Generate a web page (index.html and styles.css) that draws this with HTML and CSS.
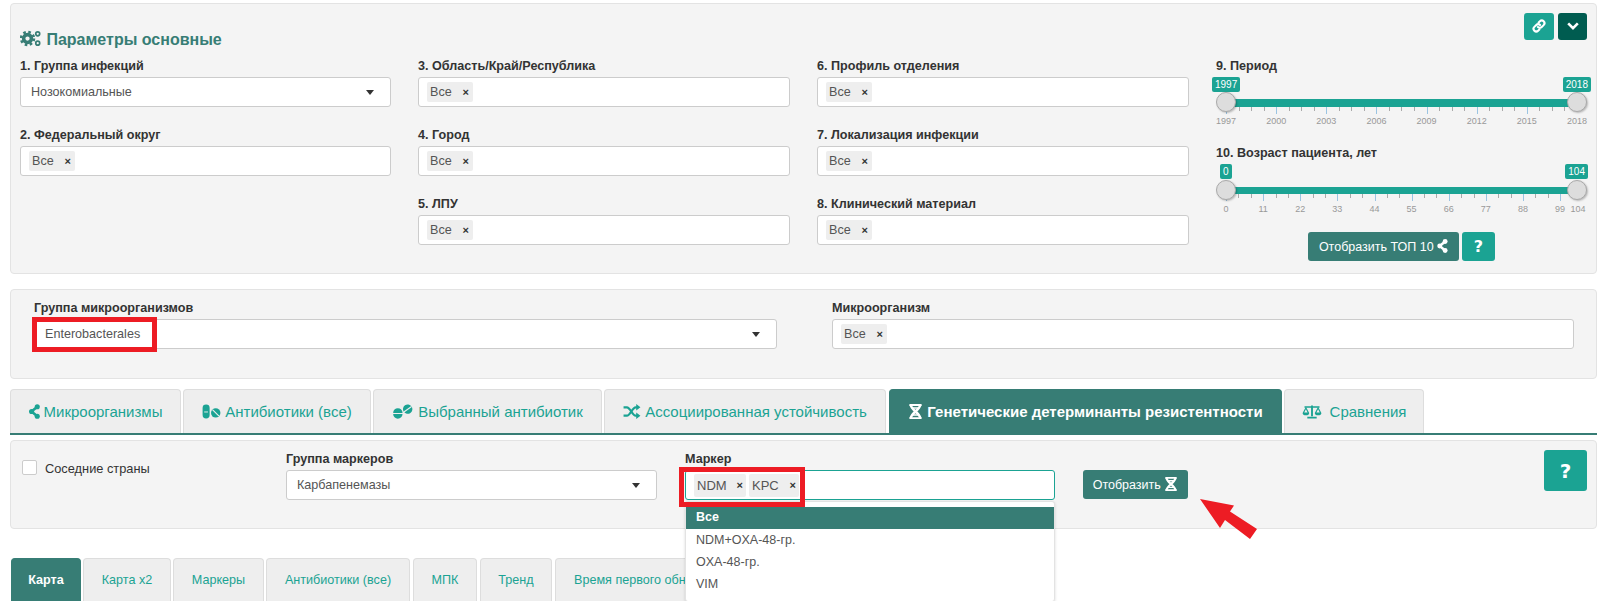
FILE: index.html
```html
<!DOCTYPE html>
<html lang="en">
  <head>
    <meta charset="UTF-8" />
    <meta name="viewport" content="width=device-width, initial-scale=1.0" />
    <title>Карта резистентности</title>
    <link rel="stylesheet" href="styles.css">
  </head>
  <body>
    <svg class="sprite" aria-hidden="true">
      <symbol id="i-cogs" viewBox="0 0 24 20">
        <circle cx="8.500" cy="10" r="4.600" fill="none" stroke="currentColor" stroke-width="4.200"/>
        <circle cx="8.500" cy="10" r="7.600" fill="none" stroke="currentColor" stroke-width="3" stroke-dasharray="3 2.970"/>
        <circle cx="20.500" cy="4.500" r="2.300" fill="none" stroke="currentColor" stroke-width="2"/>
        <circle cx="20.500" cy="15.500" r="2.300" fill="none" stroke="currentColor" stroke-width="2"/>
      </symbol>
      <symbol id="i-link" viewBox="0 0 16 16">
        <g fill="none" stroke="currentColor" stroke-width="2.400" stroke-linecap="round">
          <path d="M6.800 9.200a3 3 0 0 0 4.300 0l2.200-2.200a3 3 0 0 0-4.300-4.300L7.600 4"/>
          <path d="M9.200 6.800a3 3 0 0 0-4.300 0L2.700 9a3 3 0 0 0 4.300 4.300L8.400 12"/>
        </g>
      </symbol>
      <symbol id="i-chevron" viewBox="0 0 16 16">
        <path d="M2.500 5l5.500 5.500L13.500 5" fill="none" stroke="currentColor" stroke-width="3"/>
      </symbol>
      <symbol id="i-nodes" viewBox="0 0 12 16">
        <circle cx="9" cy="2.800" r="2.800" fill="currentColor"/>
        <circle cx="2.800" cy="8" r="2.800" fill="currentColor"/>
        <circle cx="9" cy="13.200" r="2.800" fill="currentColor"/>
        <path d="M9 2.800L2.800 8 9 13.200" fill="none" stroke="currentColor" stroke-width="2.800"/>
      </symbol>
      <symbol id="i-pills" viewBox="0 0 20 16">
        <rect x="0.500" y="0.500" width="7.500" height="15" rx="3.700" fill="currentColor"/>
        <rect x="2.200" y="8" width="4" height="1" fill="#eee"/>
        <circle cx="14.500" cy="9.500" r="5" fill="currentColor"/>
        <path d="M11 6l7 7" stroke="#eee" stroke-width="1.200"/>
      </symbol>
      <symbol id="i-tablets" viewBox="0 0 22 16">
        <path d="M0.500 9.500h10a5 5 0 0 0-10 0zM0.500 10.700h10a5 5 0 0 1-10 0z" fill="currentColor"/>
        <g transform="rotate(-35 16 5.500)">
          <circle cx="16" cy="5.500" r="5" fill="currentColor"/>
          <rect x="11" y="5" width="10" height="1.200" fill="#eee"/>
        </g>
      </symbol>
      <symbol id="i-random" viewBox="0 0 18 16">
        <g fill="none" stroke="currentColor" stroke-width="2.400">
          <path d="M0 3.500h3.500c4 0 5.500 9 9.500 9h1.500"/>
          <path d="M0 12.500h3.500c4 0 5.500-9 9.500-9h1.500"/>
        </g>
        <path d="M13.500 0l4.500 3.500-4.500 3.500zM13.500 9l4.500 3.500-4.500 3.500z" fill="currentColor"/>
      </symbol>
      <symbol id="i-dna" viewBox="0 0 14 16">
        <g fill="none" stroke="currentColor">
          <path d="M0.500 1h13M0.500 15h13" stroke-width="2"/>
          <path d="M2 1c0 5 10 9 10 14M12 1c0 5-10 9-10 14" stroke-width="2.600"/>
          <path d="M3 4.200h8M3 11.800h8" stroke-width="1.600"/>
        </g>
      </symbol>
      <symbol id="i-scale" viewBox="0 0 20 16">
        <path d="M9 1.500h2V13H9zM5 13.500h10V15.500H5zM2 2.500h16V4H2z" fill="currentColor"/>
        <path d="M0 9.500l3.500-6.500L7 9.500a3.500 2.500 0 0 1-7 0zM13 9.500l3.500-6.500L20 9.500a3.500 2.500 0 0 1-7 0z" fill="currentColor"/>
        <path d="M1.700 9h3.600L3.500 5.500zM14.700 9h3.600l-1.800-3.500z" fill="#eee"/>
      </symbol>
    </svg>

    <section class="well well-main">
      <header class="well-header">
        <h2 class="well-title">
          <svg class="icon icon-cogs"><use href="#i-cogs"/></svg>
          Параметры основные
        </h2>
        <div class="well-actions">
          <button class="btn-small btn-teal"><svg class="icon"><use href="#i-link"/></svg></button>
          <button class="btn-small btn-dark"><svg class="icon"><use href="#i-chevron"/></svg></button>
        </div>
      </header>

      <div class="filters">
        <div class="filter-col">
          <div class="field">
            <label>1. Группа инфекций</label>
            <div class="input input-select">Нозокомиальные</div>
          </div>
          <div class="field">
            <label>2. Федеральный округ</label>
            <div class="input"><span class="chip">Все <i>×</i></span></div>
          </div>
        </div>
        <div class="filter-col">
          <div class="field">
            <label>3. Область/Край/Республика</label>
            <div class="input"><span class="chip">Все <i>×</i></span></div>
          </div>
          <div class="field">
            <label>4. Город</label>
            <div class="input"><span class="chip">Все <i>×</i></span></div>
          </div>
          <div class="field">
            <label>5. ЛПУ</label>
            <div class="input"><span class="chip">Все <i>×</i></span></div>
          </div>
        </div>
        <div class="filter-col">
          <div class="field">
            <label>6. Профиль отделения</label>
            <div class="input"><span class="chip">Все <i>×</i></span></div>
          </div>
          <div class="field">
            <label>7. Локализация инфекции</label>
            <div class="input"><span class="chip">Все <i>×</i></span></div>
          </div>
          <div class="field">
            <label>8. Клинический материал</label>
            <div class="input"><span class="chip">Все <i>×</i></span></div>
          </div>
        </div>
        <div class="filter-col">
          <label>9. Период</label>
          <div class="slider">
            <span class="slider-tag tag-from">1997</span>
            <span class="slider-tag tag-to">2018</span>
            <span class="handle handle-from"></span>
            <span class="handle handle-to"></span>
            <div class="track"></div>
            <div class="ticks ticks-period"></div>
            <div class="scale scale-period">
              <span>1997</span><span>2000</span><span>2003</span><span>2006</span><span>2009</span><span>2012</span><span>2015</span><span>2018</span>
            </div>
          </div>
          <label class="label-age">10. Возраст пациента, лет</label>
          <div class="slider slider-age">
            <span class="slider-tag tag-from">0</span>
            <span class="slider-tag tag-to">104</span>
            <span class="handle handle-from"></span>
            <span class="handle handle-to"></span>
            <div class="track"></div>
            <div class="ticks ticks-age"></div>
            <div class="scale scale-age">
              <span>0</span><span>11</span><span>22</span><span>33</span><span>44</span><span>55</span><span>66</span><span>77</span><span>88</span><span>99</span><span>104</span>
            </div>
          </div>
          <div class="top-actions">
            <button class="btn btn-green">Отобразить ТОП 10 <svg class="icon icon-nodes"><use href="#i-nodes"/></svg></button>
            <button class="btn btn-help-small">?</button>
          </div>
        </div>
      </div>
    </section>

    <section class="well well-micro">
      <div class="field-micro">
        <label>Группа микроорганизмов</label>
        <div class="input input-select">Enterobacterales</div>
        <span class="mark mark-group"></span>
      </div>
      <div class="field-micro">
        <label>Микроорганизм</label>
        <div class="input"><span class="chip">Все <i>×</i></span></div>
      </div>
    </section>

    <nav class="tabs">
      <a class="tab tab-1"><svg class="icon"><use href="#i-nodes"/></svg> Микроорганизмы</a>
      <a class="tab tab-2"><svg class="icon"><use href="#i-pills"/></svg> Антибиотики (все)</a>
      <a class="tab tab-3"><svg class="icon"><use href="#i-tablets"/></svg> Выбранный антибиотик</a>
      <a class="tab tab-4"><svg class="icon"><use href="#i-random"/></svg> Ассоциированная устойчивость</a>
      <a class="tab tab-5 active"><svg class="icon"><use href="#i-dna"/></svg> Генетические детерминанты резистентности</a>
      <a class="tab tab-6"><svg class="icon"><use href="#i-scale"/></svg> Сравнения</a>
    </nav>

    <section class="well well-markers">
      <label class="check"><span class="check-box"></span> Соседние страны</label>
      <div class="field-marker">
        <label>Группа маркеров</label>
        <div class="input input-select">Карбапенемазы</div>
      </div>
      <div class="field-marker field-open">
        <label>Маркер</label>
        <div class="input input-focus">
          <span class="chip">NDM <i>×</i></span>
          <span class="chip">KPC <i>×</i></span>
        </div>
        <span class="mark mark-chips"></span>
        <ul class="dropdown">
          <li class="selected">Все</li>
          <li>NDM+OXA-48-гр.</li>
          <li>OXA-48-гр.</li>
          <li>VIM</li>
        </ul>
      </div>
      <button class="btn btn-green btn-show">Отобразить <svg class="icon"><use href="#i-dna"/></svg></button>
      <svg class="arrow" viewBox="0 0 60 42"><polygon points="0,0 34,6.500 30,12.500 57,30 50,40 25,21 20,29"/></svg>
      <button class="btn btn-help">?</button>
    </section>

    <nav class="subtabs">
      <a class="subtab active sub-1">Карта</a>
      <a class="subtab sub-2">Карта x2</a>
      <a class="subtab sub-3">Маркеры</a>
      <a class="subtab sub-4">Антибиотики (все)</a>
      <a class="subtab sub-5">МПК</a>
      <a class="subtab sub-6">Тренд</a>
      <a class="subtab sub-7">Время первого обнаружения</a>
    </nav>
  </body>
</html>
```

FILE: styles.css
```css
html,
body {
  height: 601px;
  overflow: hidden;
}

body {
  margin: 0;
  padding: 3px 6px 0 10px;
  box-sizing: border-box;
  background: #fff;
  color: #333;
  font-family: "Liberation Sans", Arial, sans-serif;
  font-size: 12.600px;
}

.sprite {
  display: none;
}

label {
  display: block;
  height: 17px;
  line-height: 13px;
  font-size: 12.600px;
  font-weight: 700;
  color: #333;
}

button {
  font-family: inherit;
  border: none;
  cursor: pointer;
}

.icon {
  display: inline-block;
  width: 14px;
  height: 14px;
  fill: currentColor;
  vertical-align: -2px;
}

.well {
  box-sizing: border-box;
  background: #f4f4f4;
  border: 1px solid #e3e3e3;
  border-radius: 4px;
}

.well-main {
  height: 271px;
  padding: 9px 9px 0 9px;
}

.well-header {
  display: flex;
  justify-content: space-between;
  height: 47px;
}

.well-title {
  margin: 17px 0 0;
  font-size: 16px;
  line-height: 20px;
  color: #377d75;
}

.icon-cogs {
  width: 21px;
  height: 17px;
  margin-right: 1px;
}

.well-actions {
  display: flex;
  gap: 4px;
}

.btn-small {
  width: 30px;
  height: 27px;
  padding: 0;
  border-radius: 3px;
  color: #fff;
}

.btn-teal {
  background: #1ba393;
}

.btn-dark {
  width: 29px;
  background: #005c50;
}

.filters {
  display: grid;
  grid-template-columns: 371px 372px 372px 371px;
  column-gap: 27px;
}

.field {
  margin-bottom: 22px;
}

.input {
  box-sizing: border-box;
  display: flex;
  align-items: center;
  gap: 3px;
  height: 30px;
  padding: 0 10px 0 8px;
  background: #fff;
  border: 1px solid #ccc;
  border-radius: 3px;
  font-size: 12.600px;
  color: #555;
}

.input-select {
  position: relative;
  padding-left: 10px;
}

.input-select::after {
  content: "";
  position: absolute;
  right: 16px;
  top: 12px;
  border: 4px solid transparent;
  border-top: 5px solid #333;
  border-bottom: none;
}

.input-focus {
  border-color: #1ba393;
}

.chip {
  display: flex;
  align-items: center;
  justify-content: space-between;
  box-sizing: border-box;
  width: 46px;
  height: 20px;
  padding: 0 4px 0 3px;
  background: #eee;
  border-radius: 2px;
  font-size: 12.600px;
  color: #555;
}

.chip i {
  font-style: normal;
  font-weight: 700;
  font-size: 11px;
  color: #333;
}

.input-focus .chip {
  width: 52px;
  height: 23px;
  padding: 0 3px;
  font-size: 13px;
}

.input-focus .chip + .chip {
  width: 50px;
}

.slider {
  position: relative;
  height: 52px;
  padding: 22px 10px 0;
  box-sizing: border-box;
}

.slider-age {
  height: 60px;
  padding-top: 23px;
}

.track {
  height: 8px;
  background: #1ba393;
}

.slider-age .track {
  height: 7px;
}

.handle {
  position: absolute;
  top: 15px;
  width: 18px;
  height: 18px;
  background: #ddd;
  border: 1px solid #aaa;
  border-radius: 50%;
  box-shadow: 1px 1px 2px rgba(0, 0, 0, 0.25);
}

.slider-age .handle {
  top: 16px;
}

.handle-from {
  left: 0;
}

.handle-to {
  right: 0;
}

.slider-tag {
  position: absolute;
  top: 0;
  height: 15px;
  line-height: 15px;
  padding: 0 3px;
  background: #1ba393;
  border-radius: 2px;
  color: #fff;
  font-size: 10px;
}

.tag-from {
  left: -4px;
}

.tag-to {
  right: -4px;
}

.slider-age .tag-from {
  left: 4px;
}

.slider-age .tag-to {
  right: -1px;
}

.ticks {
  height: 7px;
}

.ticks-period {
  background:
    repeating-linear-gradient(90deg, #9bc4e2 0 1px, transparent 1px 50.140px) 0 0 / 100% 7px no-repeat,
    repeating-linear-gradient(90deg, #aaa 0 1px, transparent 1px 12.535px) 0 0 / 100% 4px no-repeat;
}

.ticks-age {
  background:
    repeating-linear-gradient(90deg, #9bc4e2 0 1px, transparent 1px 37.130px) 0 0 / 100% 7px no-repeat,
    repeating-linear-gradient(90deg, #aaa 0 1px, transparent 1px 12.377px) 0 0 / 100% 4px no-repeat;
}

.scale {
  display: grid;
  margin-top: 1px;
  height: 12px;
  line-height: 12px;
  font-size: 9px;
  color: #999;
}

.slider-age .scale {
  margin-top: 2px;
}

.scale span {
  justify-self: start;
  transform: translateX(-50%);
}

.scale-period {
  grid-template-columns: repeat(7, 1fr) 0;
}

.scale-age {
  grid-template-columns: repeat(9, 37.130px) 17.800px 0;
}

.label-age {
  margin-top: 18px;
}

.top-actions {
  display: flex;
  justify-content: center;
  gap: 3px;
  margin-top: 8px;
}

.btn {
  height: 29px;
  padding: 0;
  border-radius: 3px;
  color: #fff;
  font-size: 12.500px;
}

.btn-green {
  width: 151px;
  background: #377d75;
}

.icon-nodes {
  width: 11px;
}

.btn-help-small {
  width: 33px;
  background: #1ba393;
  font-family: "DejaVu Sans", sans-serif;
  font-size: 16px;
  font-weight: 700;
}

.well-micro {
  display: grid;
  grid-template-columns: 743px 742px;
  column-gap: 55px;
  height: 90px;
  margin-top: 15px;
  padding: 11px 23px 0;
}

.field-micro {
  position: relative;
}

.field-micro label {
  line-height: 15px;
  margin-bottom: 1px;
}

.mark {
  position: absolute;
  z-index: 3;
  box-sizing: border-box;
  border: 5px solid #ed1c24;
}

.mark-group {
  left: -2px;
  top: 16px;
  width: 125px;
  height: 35px;
}

.tabs {
  display: flex;
  gap: 2px;
  height: 44px;
  margin-top: 10px;
  border-bottom: 2px solid #377d75;
}

.tab {
  box-sizing: border-box;
  display: flex;
  align-items: center;
  justify-content: center;
  gap: 4px;
  height: 44px;
  background: #eee;
  border: 1px solid #ddd;
  border-bottom: none;
  border-radius: 4px 4px 0 0;
  font-size: 15px;
  color: #1ba393;
  white-space: nowrap;
}

.tab .icon {
  width: 15px;
  height: 15px;
  vertical-align: 0;
}

.tab-1 { width: 171px; }
.tab-2 { width: 188px; }
.tab-3 { width: 229px; }
.tab-4 { width: 282px; }
.tab-5 { width: 393px; margin-left: 1px; }
.tab-6 { width: 140px; gap: 8px; }

.tab-1 .icon { width: 11px; }
.tab-2 .icon { width: 19px; }
.tab-3 .icon { width: 22px; }
.tab-4 .icon { width: 18px; }
.tab-6 .icon { width: 20px; }

.tab.active {
  background: #377d75;
  border-color: #377d75;
  color: #fff;
  font-weight: 700;
}

.well-markers {
  position: relative;
  display: flex;
  align-items: flex-start;
  height: 89px;
  margin-top: 5px;
  padding: 10px 9px 0 11px;
}

.check {
  display: flex;
  align-items: center;
  gap: 8px;
  width: 264px;
  margin-top: 9px;
  line-height: 17px;
  font-size: 12.800px;
  font-weight: 400;
}

.check-box {
  box-sizing: border-box;
  width: 15px;
  height: 15px;
  margin-top: -2px;
  background: #fff;
  border: 1px solid #ccc;
  border-radius: 2px;
}

.field-marker {
  position: relative;
  width: 371px;
  margin-right: 28px;
}

.field-open {
  width: 370px;
}

.field-marker label {
  line-height: 17px;
  margin-bottom: 2px;
}

.mark-chips {
  left: -6px;
  top: 16px;
  width: 126px;
  height: 40px;
}

.dropdown {
  position: absolute;
  z-index: 2;
  top: 50px;
  left: 0;
  width: 100%;
  box-sizing: border-box;
  margin: 0;
  padding: 5px 0 6px;
  list-style: none;
  background: #fff;
  border: 1px solid #e3e3e3;
  border-radius: 3px;
  box-shadow: 0 1px 3px rgba(0, 0, 0, 0.15);
  font-size: 12.500px;
  color: #555;
}

.dropdown li {
  height: 22px;
  line-height: 22px;
  padding-left: 10px;
}

.dropdown .selected {
  line-height: 20px;
  background: #377d75;
  color: #fff;
  font-weight: 700;
}

.btn-show {
  width: 105px;
  margin-top: 19px;
}

.arrow {
  position: absolute;
  z-index: 3;
  left: 1189px;
  top: 58px;
  width: 60px;
  height: 42px;
  fill: #ed1c24;
}

.btn-help {
  width: 43px;
  height: 41px;
  margin-left: auto;
  margin-top: -1px;
  background: #1ba393;
  font-family: "DejaVu Sans", sans-serif;
  font-size: 20px;
  font-weight: 700;
}

.subtabs {
  display: flex;
  gap: 2px;
  margin-top: 29px;
  padding-left: 1px;
}

.subtab {
  box-sizing: border-box;
  display: flex;
  align-items: center;
  justify-content: center;
  height: 44px;
  padding-bottom: 2px;
  background: #eee;
  border: 1px solid #ddd;
  border-bottom: none;
  border-radius: 4px 4px 0 0;
  font-size: 12.600px;
  color: #1ba393;
  white-space: nowrap;
}

.sub-1 { width: 70px; }
.sub-2 { width: 88px; }
.sub-3 { width: 91px; }
.sub-4 { width: 144px; }
.sub-5 { width: 64px; margin-left: 1px; }
.sub-6 { width: 72px; margin-left: 1px; }
.sub-7 {
  width: 135px;
  margin-left: 1px;
  padding-left: 18px;
  justify-content: flex-start;
  overflow: hidden;
}

.subtab.active {
  background: #377d75;
  border-color: #377d75;
  color: #fff;
  font-weight: 700;
}
```
